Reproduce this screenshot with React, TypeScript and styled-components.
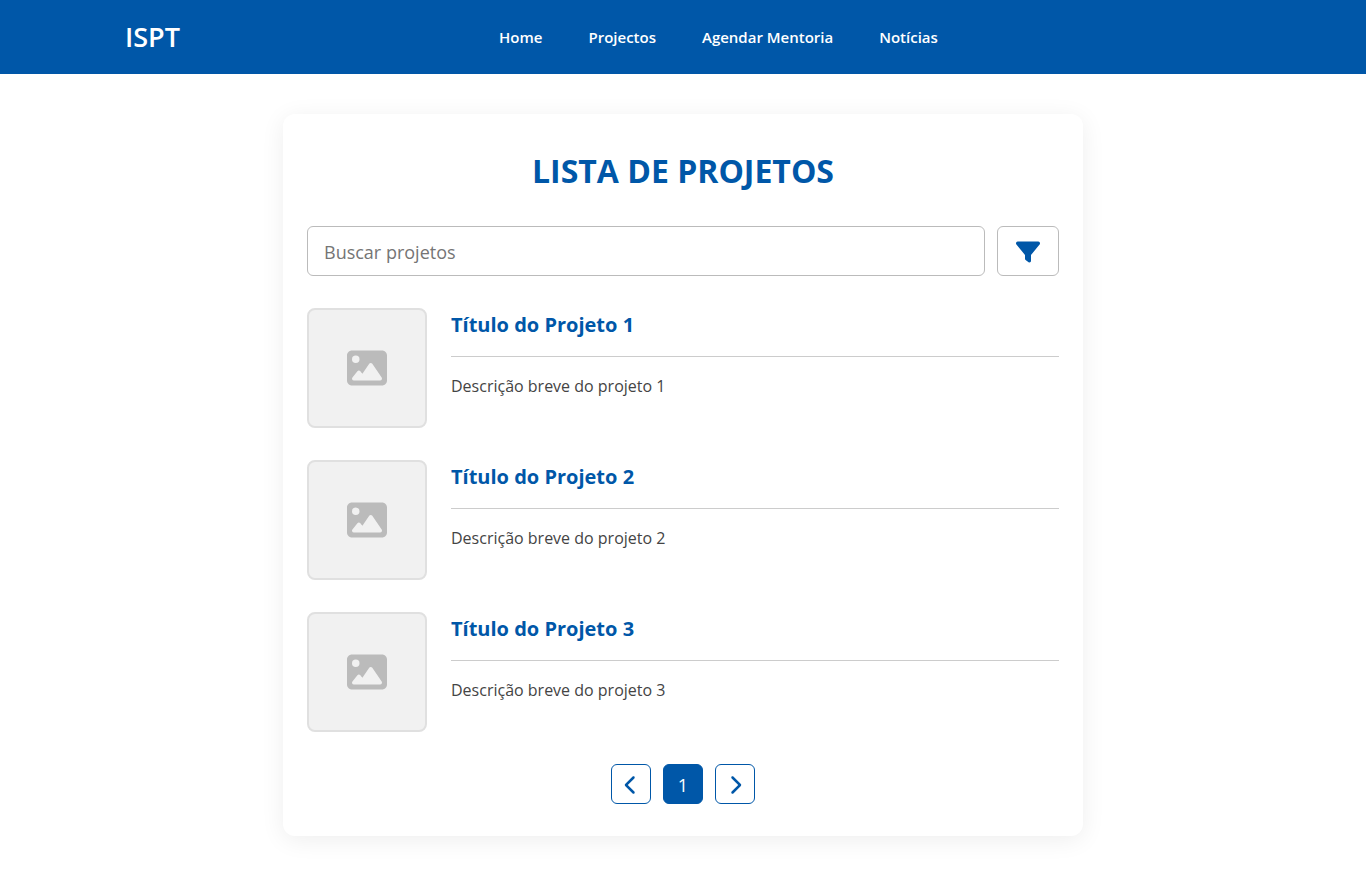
import React from "react";
import styled, { createGlobalStyle } from "styled-components";
import { FaChevronLeft, FaChevronRight, FaFilter, FaImage } from "react-icons/fa6";

const BLUE = "#0057a8";

const GlobalStyle = createGlobalStyle`
  *, *::before, *::after { box-sizing: border-box; }
  body {
    margin: 0;
    background: #fff;
    color: #333;
    font-family: "Segoe UI", "Open Sans", "Noto Sans", sans-serif;
    font-size: 16px;
    line-height: 24px;
  }
  h1, h2, p, ul { margin: 0; padding: 0; }
  ul { list-style: none; }
  button, input { font-family: inherit; }
`;

const Header = styled.header`
  background: ${BLUE};
`;

const HeaderInner = styled.div`
  display: flex;
  align-items: center;
  max-width: 1140px;
  min-height: 74px;
  margin: 0 auto;
  padding: 0 12px;
`;

const Brand = styled.a`
  margin-right: 16px;
  color: #fff;
  font-size: 27px;
  font-weight: 600;
  line-height: 42px;
  text-decoration: none;
`;

const Nav = styled.nav`
  display: flex;
  flex-wrap: wrap;
  gap: 46px;
  margin: 0 auto;
`;

const NavLink = styled.a`
  color: #fff;
  font-size: 15px;
  font-weight: 600;
  text-decoration: none;
`;

const Card = styled.main`
  max-width: 800px;
  margin: 40px auto;
  padding: 32px 24px;
  border-radius: 12px;
  background: #fff;
  box-shadow: 0 4px 24px rgba(0, 0, 0, 0.07);
`;

const Title = styled.h1`
  margin: 4px 0 34px;
  color: ${BLUE};
  font-size: 32px;
  font-weight: 700;
  line-height: 42px;
  text-align: center;
`;

const SearchRow = styled.form`
  display: flex;
  gap: 12px;
  margin-bottom: 32px;
`;

const SearchInput = styled.input`
  flex: 1;
  min-width: 0;
  height: 50px;
  padding: 2px 16px 0;
  border: 1px solid #bbb;
  border-radius: 6px;
  background: #fff;
  color: #333;
  font-size: 18px;

  &::placeholder { color: #757575; opacity: 1; }
`;

const FilterButton = styled.button`
  display: flex;
  align-items: center;
  justify-content: center;
  width: 62px;
  height: 50px;
  padding: 2px 0 0;
  border: 1px solid #bbb;
  border-radius: 6px;
  background: #fff;
  color: ${BLUE};
  font-size: 24px;
  cursor: pointer;
`;

const ProjectList = styled.ul`
  display: flex;
  flex-direction: column;
  gap: 32px;
`;

const Project = styled.li`
  display: flex;
  gap: 24px;
`;

const Thumbnail = styled.div`
  display: flex;
  flex: none;
  align-items: center;
  justify-content: center;
  width: 120px;
  height: 120px;
  border: 2px solid #e0e0e0;
  border-radius: 8px;
  background: #f1f1f1;
  color: #bbb;
  font-size: 40px;
`;

const ProjectInfo = styled.div`
  flex: 1;
  min-width: 0;
`;

const ProjectTitle = styled.h2`
  padding-bottom: 14px;
  border-bottom: 1px solid #ccc;
  color: ${BLUE};
  font-size: 20px;
  font-weight: 700;
  line-height: 34px;
`;

const Description = styled.p`
  margin-top: 16px;
  color: #444;
  font-size: 16px;
  line-height: 26px;
`;

const Pagination = styled.nav`
  display: flex;
  justify-content: center;
  gap: 12px;
  margin-top: 32px;
`;

const PageButton = styled.button<{ $active?: boolean }>`
  display: flex;
  align-items: center;
  justify-content: center;
  width: 40px;
  height: 40px;
  padding: 2px 0 0;
  border: 1px solid ${BLUE};
  border-radius: 6px;
  background: ${(p) => (p.$active ? BLUE : "#fff")};
  color: ${(p) => (p.$active ? "#fff" : BLUE)};
  font-size: ${(p) => (p.$active ? 18 : 20)}px;
  cursor: pointer;
`;

const links = ["Home", "Projectos", "Agendar Mentoria", "Notícias"];
const projects = [1, 2, 3].map((id) => ({
  id,
  title: `Título do Projeto ${id}`,
  description: `Descrição breve do projeto ${id}`,
}));

export default function App() {
  return (
    <>
      <GlobalStyle />
      <Header>
        <HeaderInner>
          <Brand href="#">ISPT</Brand>
          <Nav>
            {links.map((label) => (
              <NavLink key={label} href="#">{label}</NavLink>
            ))}
          </Nav>
        </HeaderInner>
      </Header>
      <Card>
        <Title>LISTA DE PROJETOS</Title>
        <SearchRow onSubmit={(e) => e.preventDefault()}>
          <SearchInput type="text" placeholder="Buscar projetos" aria-label="Buscar projetos" />
          <FilterButton type="button" aria-label="Filtrar"><FaFilter /></FilterButton>
        </SearchRow>
        <ProjectList>
          {projects.map((project) => (
            <Project key={project.id}>
              <Thumbnail><FaImage /></Thumbnail>
              <ProjectInfo>
                <ProjectTitle>{project.title}</ProjectTitle>
                <Description>{project.description}</Description>
              </ProjectInfo>
            </Project>
          ))}
        </ProjectList>
        <Pagination aria-label="Paginação">
          <PageButton type="button" aria-label="Página anterior"><FaChevronLeft /></PageButton>
          <PageButton type="button" $active aria-current="page">1</PageButton>
          <PageButton type="button" aria-label="Próxima página"><FaChevronRight /></PageButton>
        </Pagination>
      </Card>
    </>
  );
}
